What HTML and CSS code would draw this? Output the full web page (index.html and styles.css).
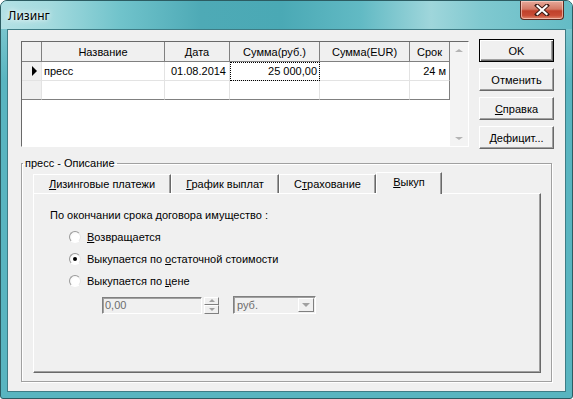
FILE: index.html
```html
<!DOCTYPE html>
<html lang="ru">
<head>
    <meta charset="UTF-8">
    <title>Лизинг</title>
    <link rel="stylesheet" href="styles.css">
</head>
<body>
    <div class="window">
        <!-- заголовок окна -->
        <div class="titlebar">
            <span class="title">Лизинг</span>
            <div class="close-btn">
                <svg width="16" height="12" viewBox="0 0 16 12">
                    <path d="M3 1.5 L13 10.5 M13 1.5 L3 10.5" stroke="#3a1a14" stroke-width="4" stroke-linecap="square"/>
                    <path d="M3.5 2 L12.5 10 M12.5 2 L3.5 10" stroke="#fff" stroke-width="2.2" stroke-linecap="square"/>
                </svg>
            </div>
        </div>

        <div class="client">
            <div class="top-row">
                <!-- таблица договоров -->
                <div class="grid">
                    <table class="grid-table">
                        <tr>
                            <th class="ind"></th>
                            <th class="c-name">Название</th>
                            <th class="c-date">Дата</th>
                            <th class="c-sum">Сумма(руб.)</th>
                            <th class="c-eur">Сумма(EUR)</th>
                            <th class="c-term">Срок</th>
                        </tr>
                        <tr>
                            <td class="ind"><span class="pointer"></span></td>
                            <td>пресс</td>
                            <td class="num">01.08.2014</td>
                            <td class="num focused">25 000,00</td>
                            <td></td>
                            <td class="num last-col">24 м</td>
                        </tr>
                        <tr class="last-row">
                            <td class="ind"></td>
                            <td></td>
                            <td></td>
                            <td></td>
                            <td></td>
                            <td class="last-col"></td>
                        </tr>
                    </table>
                    <div class="vscroll">
                        <span class="arr-up"></span>
                        <span class="arr-down"></span>
                    </div>
                </div>

                <div class="buttons">
                    <button class="btn default">OK</button>
                    <button class="btn">Отменить</button>
                    <button class="btn"><u>С</u>правка</button>
                    <button class="btn"><u>Д</u>ефицит...</button>
                </div>
            </div>

            <fieldset class="group">
                <legend>пресс - Описание</legend>
                <div class="tabs">
                    <div class="tab-strip">
                        <div class="tab t1"><span><u>Л</u>изинговые платежи</span></div>
                        <div class="tab t2"><span><u>Г</u>рафик выплат</span></div>
                        <div class="tab t3"><span>С<u>т</u>рахование</span></div>
                        <div class="tab t4 active"><span><u>В</u>ыкуп</span></div>
                    </div>
                    <div class="tab-panel">
                        <div class="line"><span>По окончании срока договора имущество :</span></div>
                        <div class="radios">
                            <div class="line"><span class="radio"></span><span><u>В</u>озвращается</span></div>
                            <div class="line"><span class="radio checked"></span><span>Выкупается по <u>о</u>статочной стоимости</span></div>
                            <div class="line"><span class="radio"></span><span>Выкупается по <u>ц</u>ене</span></div>
                            <div class="price-row">
                                <div class="edit">0,00</div>
                                <div class="spin">
                                    <span class="spin-btn"><span class="tri-up"></span></span>
                                    <span class="spin-btn"><span class="tri-down"></span></span>
                                </div>
                                <div class="combo">
                                    <span class="combo-text">руб.</span>
                                    <span class="combo-btn"><span class="tri-down"></span></span>
                                </div>
                            </div>
                        </div>
                    </div>
                </div>
            </fieldset>
        </div>
    </div>
</body>
</html>
```

FILE: styles.css
```css
/* окно */
body {
    margin: 0;
    font-family: "Liberation Sans", Arial, sans-serif;
    font-size: 11px;
    color: #000;
    background: #fff;
}

.window {
    width: 573px;
    height: 399px;
    box-sizing: border-box;
    border: 1px solid #2c5c62;
    border-radius: 7px 7px 3px 3px;
    background: linear-gradient(180deg, rgba(170, 222, 226, 0.6) 0, rgba(90, 181, 192, 0) 80px), #59b5c0;
    display: flex;
    flex-direction: column;
    overflow: hidden;
}

.titlebar {
    height: 28px;
    display: flex;
    align-items: flex-start;
    padding-left: 7px;
    padding-right: 8px;
    background: linear-gradient(90deg, #b3e1e5 0, #a3dade 50px, #70c3cb 120px, #4eaab6 200px, #4aa9b5 280px, #62bac4 360px, #9fd6db 430px, #80c9d0 480px, #63bbc5 573px);
}

.title {
    font-family: "Noto Sans", "Liberation Sans", sans-serif;
    font-size: 12px;
    line-height: 16px;
    margin-top: 7px;
    text-shadow: 0 0 5px #fff, 0 0 8px #fff;
}

.close-btn {
    margin-left: auto;
    width: 44px;
    height: 19px;
    box-sizing: border-box;
    border: 1px solid #5a2a20;
    border-top: none;
    border-radius: 0 0 4px 4px;
    background: linear-gradient(180deg, #e6a99a 0, #d47a66 45%, #c0412b 55%, #c84c35 80%, #e08a70 100%);
    box-shadow: inset 0 0 0 1px rgba(255, 220, 210, 0.6);
    display: flex;
    align-items: center;
    justify-content: center;
}

.client {
    flex: 1;
    margin: 0 6px 6px 6px;
    border: 1px solid #3e7c85;
    background: #f0f0f0;
    padding: 9px 0 0 13px;
}

/* верхняя часть: таблица и кнопки */
.top-row {
    display: flex;
    gap: 10px;
}

.grid {
    margin-top: 2px;
    width: 448px;
    height: 106px;
    box-sizing: border-box;
    border: 1px solid;
    border-color: #696969 #fff #fff #696969;
    background: #fff;
    display: flex;
    align-items: flex-start;
}

.grid-table {
    width: 428px;
    table-layout: fixed;
    border-collapse: separate;
    border-spacing: 0;
}

.grid-table th,
.grid-table td {
    box-sizing: border-box;
    padding: 0 2px;
    height: 19px;
    font-weight: normal;
    white-space: nowrap;
    overflow: hidden;
    border-right: 1px solid #e3e3e3;
    border-bottom: 1px solid #e3e3e3;
}

.grid-table th {
    height: 20px;
    background: #f0f0f0;
    text-align: center;
    border-right-color: #808080;
    border-bottom-color: #808080;
}

.grid-table .ind {
    width: 20px;
    background: #f0f0f0;
    padding: 0 0 0 10px;
}

.c-name { width: 123px; }
.c-date { width: 65px; }
.c-sum { width: 90px; }
.c-eur { width: 90px; }
.c-term { width: 40px; }

.grid-table td.num {
    text-align: right;
    padding-right: 3px;
}

.grid-table td.last-col {
    border-right-color: #808080;
}

.grid-table .last-row td {
    border-bottom-color: #808080;
}

.grid-table td.focused {
    outline: 1px dotted #000;
    outline-offset: -1px;
    padding-right: 2px;
}

.pointer {
    display: block;
    width: 0;
    height: 0;
    border-left: 5px solid #000;
    border-top: 5px solid transparent;
    border-bottom: 5px solid transparent;
}

.vscroll {
    width: 18px;
    height: 104px;
    background: #f3f3f3;
    display: flex;
    flex-direction: column;
    justify-content: space-between;
    align-items: center;
    padding: 7px 0 6px;
    box-sizing: border-box;
}

.arr-up,
.arr-down {
    width: 0;
    height: 0;
    border-left: 4px solid transparent;
    border-right: 4px solid transparent;
}

.arr-up { border-bottom: 3px solid #b4b4b4; }
.arr-down { border-top: 3px solid #b4b4b4; }

.buttons {
    display: flex;
    flex-direction: column;
    gap: 6px;
}

.btn {
    width: 75px;
    height: 23px;
    padding: 0;
    font-family: inherit;
    font-size: 11px;
    font-weight: normal;
    color: #000;
    background: #f0f0f0;
    border: 1px solid;
    border-color: #fff #696969 #696969 #fff;
    box-shadow: inset -1px -1px 0 #a0a0a0;
}

.btn.default {
    border: 1px solid #000;
    box-shadow: inset 1px 1px 0 #fff, inset -1px -1px 0 #696969, inset -2px -2px 0 #a0a0a0;
}

/* группа с вкладками */
.group {
    margin: 8px 0 0 0;
    padding: 0;
    width: 531px;
    height: 225px;
    box-sizing: border-box;
    border: 1px solid #a0a0a0;
    box-shadow: inset 1px 1px 0 #fff, 1px 1px 0 #fff;
}

.group legend {
    margin-left: 1px;
    padding: 0 2px;
    line-height: 13px;
}

.tabs {
    margin: 2px 10px 0 11px;
}

.tab-strip {
    height: 21px;
    display: flex;
    align-items: flex-end;
}

.tab {
    height: 19px;
    box-sizing: border-box;
    border-top: 1px solid #fff;
    border-left: 1px solid #fff;
    border-right: 1px solid #696969;
    box-shadow: inset -1px 0 0 #a0a0a0;
    display: flex;
    align-items: center;
    justify-content: center;
    padding-bottom: 1px;
}

.t1 { width: 138px; }
.t2 { width: 108px; }
.t3 { width: 97px; }
.t4 { width: 66px; }

.tab.active {
    height: 22px;
    margin-bottom: -1px;
    position: relative;
    z-index: 1;
    background: #f0f0f0;
    padding-bottom: 4px;
}

.tab-panel {
    height: 180px;
    box-sizing: border-box;
    border: 1px solid;
    border-color: #fff #696969 #696969 #fff;
    box-shadow: inset -1px -1px 0 #a0a0a0;
    padding: 10px 0 0 16px;
}

.line {
    height: 22px;
    display: flex;
    align-items: center;
}

.radios {
    margin-left: 19px;
}

.radio {
    width: 12px;
    height: 12px;
    box-sizing: border-box;
    border-radius: 50%;
    border: 1px solid;
    border-color: #9a9a9a #e6e6e6 #fff #9a9a9a;
    background: radial-gradient(circle at 60% 60%, #fff 0, #fff 45%, #ececec 100%);
    margin-right: 6px;
    display: flex;
    align-items: center;
    justify-content: center;
}

.radio.checked::after {
    content: "";
    width: 4px;
    height: 4px;
    border-radius: 50%;
    background: #000;
}

/* поле цены */
.price-row {
    margin: 4px 0 0 33px;
    display: flex;
    align-items: center;
}

.edit {
    width: 100px;
    height: 17px;
    box-sizing: border-box;
    border: 1px solid;
    border-color: #808080 #fff #fff #808080;
    box-shadow: inset 1px 1px 0 #a0a0a0;
    color: #6d6d6d;
    padding: 1px 0 0 2px;
    line-height: 13px;
}

.spin {
    width: 15px;
    height: 17px;
    margin-left: 2px;
    display: flex;
    flex-direction: column;
}

.spin-btn {
    flex: 1;
    box-sizing: border-box;
    border: 1px solid;
    border-color: #fff #808080 #808080 #fff;
    display: flex;
    align-items: center;
    justify-content: center;
}

.tri-up,
.tri-down {
    width: 0;
    height: 0;
    border-left: 3px solid transparent;
    border-right: 3px solid transparent;
}

.tri-up { border-bottom: 3px solid #a0a0a0; }
.tri-down { border-top: 3px solid #a0a0a0; }

.combo {
    width: 83px;
    height: 18px;
    margin-left: 14px;
    box-sizing: border-box;
    border: 1px solid;
    border-color: #808080 #fff #fff #808080;
    box-shadow: inset 1px 1px 0 #a0a0a0;
    display: flex;
    align-items: center;
    padding: 1px;
}

.combo-text {
    flex: 1;
    color: #6d6d6d;
    padding-left: 2px;
}

.combo-btn {
    width: 16px;
    height: 14px;
    box-sizing: border-box;
    border: 1px solid;
    border-color: #fff #808080 #808080 #fff;
    display: flex;
    align-items: center;
    justify-content: center;
}

.combo-btn .tri-down {
    border-left-width: 4px;
    border-right-width: 4px;
    border-top-width: 4px;
}
```
